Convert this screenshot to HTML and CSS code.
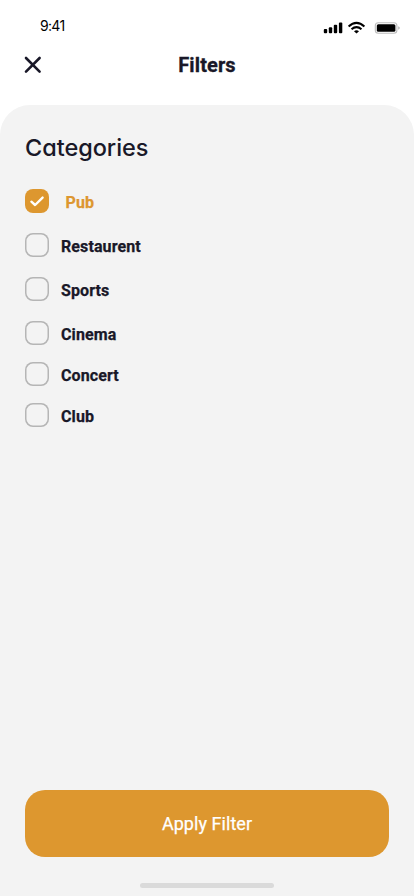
FILE: index.html
```html
<!DOCTYPE html>
<html lang="en">
<head>
<meta charset="utf-8">
<meta name="viewport" content="width=device-width, initial-scale=1">
<title>Filters</title>
<link rel="stylesheet" href="styles.css">
</head>
<body>
<div class="screen">
  <div class="status">
    <span class="time">9:41</span>
    <svg class="indicators" width="78" height="14" viewBox="0 0 78 14">
      <g fill="#000">
        <rect x="0.8" y="8" width="3.4" height="4.2" rx="1"/>
        <rect x="5.8" y="6.2" width="3.4" height="6" rx="1"/>
        <rect x="10.8" y="3.8" width="3.4" height="8.4" rx="1"/>
        <rect x="15.9" y="1.5" width="3.4" height="10.7" rx="1"/>
        <path d="M31 10.2 33.5 12.6 36 10.2Q33.5 8.3 31 10.2Z"/>
      </g>
      <path d="M25.6 5.4Q33.5-1.7 41.4 5.4M28.5 8.2Q33.5 4 38.5 8.2" fill="none" stroke="#000" stroke-width="2"/>
      <rect x="52.3" y="1.8" width="21.6" height="10.4" rx="3" fill="#fff" stroke="#bdbdbd" stroke-width="1.1"/>
      <rect x="53.8" y="3.3" width="18.6" height="7.4" rx="1.5" fill="#000"/>
      <path d="M75.3 5.2v3.6q1.4-.5 1.4-1.8t-1.4-1.8Z" fill="#aaa"/>
    </svg>
  </div>
  <header class="header">
    <button class="close" aria-label="Close">
      <svg width="18" height="18" viewBox="0 0 18 18"><path d="M2 2 15.6 15.6M15.6 2 2 15.6" fill="none" stroke="#191828" stroke-width="2.6" stroke-linecap="round"/></svg>
    </button>
    <h1 class="title">Filters</h1>
  </header>
  <main class="panel">
    <h2 class="heading">Categories</h2>
    <ul class="options">
      <li class="option selected"><span class="box"><svg width="24" height="24" viewBox="0 0 24 24"><path d="M6.4 12.7 10.1 16 17.6 8.6" fill="none" stroke="#fff" stroke-width="2.4" stroke-linecap="round" stroke-linejoin="round"/></svg></span><span class="label">Pub</span></li>
      <li class="option"><span class="box"></span><span class="label">Restaurent</span></li>
      <li class="option"><span class="box"></span><span class="label">Sports</span></li>
      <li class="option"><span class="box"></span><span class="label">Cinema</span></li>
      <li class="option compact"><span class="box"></span><span class="label">Concert</span></li>
      <li class="option compact"><span class="box"></span><span class="label">Club</span></li>
    </ul>
    <button class="apply">Apply Filter</button>
    <div class="home"></div>
  </main>
</div>
</body>
</html>
```
FILE: styles.css
```css
* { box-sizing: border-box; }
body { margin: 0; background: #fff; color: #191828; font-family: Roboto, sans-serif; }
h1, h2, ul { margin: 0; padding: 0; }
button { border: 0; padding: 0; font-family: inherit; }
.screen { width: 414px; height: 896px; display: flex; flex-direction: column; overflow: hidden; }
.status { height: 44px; padding: 17px 13px 0 40px; display: flex; justify-content: space-between; align-items: flex-start; }
.time { font: 400 14px/18px Inter, sans-serif; color: #000; letter-spacing: -.7px; }
.indicators { margin-top: 4px; }
.header { height: 61px; padding: 0 24px 19px; display: grid; grid-template-columns: 18px 1fr 18px; align-items: center; }
.close { display: flex; width: 18px; height: 18px; background: none; }
.title { font-size: 20px; line-height: 24px; font-weight: 700; text-align: center; letter-spacing: .1px; -webkit-text-stroke: .3px #191828; }
.panel { flex: 1; padding: 27px 25px 8px; background: #f3f3f3; border-radius: 30px 30px 0 0; display: flex; flex-direction: column; }
.heading { font: 500 23.5px/32px Inter, sans-serif; font-feature-settings: "cv11"; letter-spacing: -.05px; }
.options { margin-top: 25px; list-style: none; }
.option { height: 24px; margin-bottom: 20px; display: flex; align-items: center; gap: 12px; font-size: 16px; line-height: 24px; font-weight: 700; letter-spacing: .1px; }
.option.compact { margin-top: -3px; }
.label { padding-top: 3px; -webkit-text-stroke: .25px currentColor; }
.box { width: 24px; height: 24px; flex: none; box-shadow: inset 0 0 0 1.5px #b5b5b5; border-radius: 8px; }
.selected { gap: 16.5px; color: #dd972f; }
.selected .box { display: flex; box-shadow: none; background: #dd972f; }
.apply { height: 67px; margin-top: auto; flex: none; border-radius: 20px; background: #dd972f; color: #fff; font-size: 18px; font-weight: 400; letter-spacing: .05px; -webkit-text-stroke: .25px #fff; }
.home { width: 134px; height: 5px; flex: none; margin: 26px auto 0; border-radius: 3px; background: #dadada; }
```
